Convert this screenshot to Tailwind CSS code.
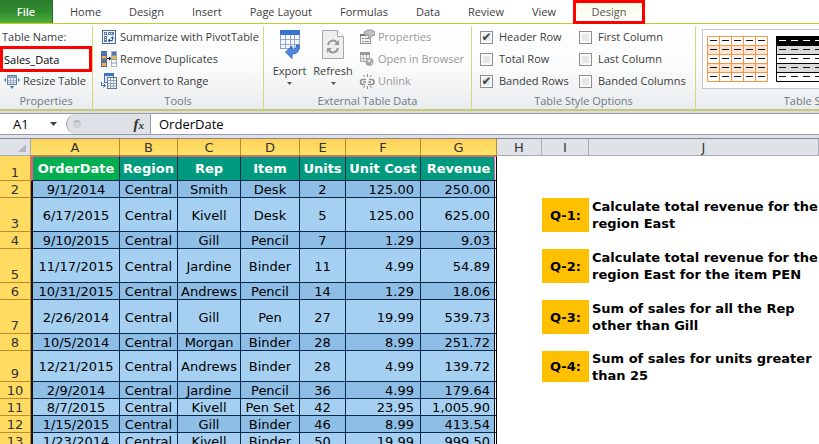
<!DOCTYPE html>
<html lang="en">
<head>
    <meta charset="UTF-8">
    <meta name="viewport" content="width=device-width, initial-scale=1.0">
    <title>Sales Data</title>
    <script src="https://cdn.jsdelivr.net/npm/@tailwindcss/browser@4"></script>
</head>
<body class="bg-white overflow-hidden font-['Open_Sans',sans-serif] text-[11px] leading-4 text-[#3c3c3c]">

    <!-- Ribbon tabs -->
    <nav class="flex h-6 whitespace-nowrap border-b border-[#c9ca2b]">
        <button class="w-[53px] mr-[3px] shrink-0 bg-linear-to-b from-[#2c7a2c] via-[#2f8c2f] to-[#4fae3c] border-r border-[#1e6b26] text-white font-semibold">File</button>
        <button class="px-3.5">Home</button>
        <button class="px-3.5">Design</button>
        <button class="px-3.5">Insert</button>
        <button class="px-3.5">Page Layout</button>
        <button class="px-3.5">Formulas</button>
        <button class="px-3.5">Data</button>
        <button class="px-3.5">Review</button>
        <button class="px-3.5">View</button>
        <button class="h-6 w-[72px] ml-[3px] border-3 border-[#fe0000] bg-linear-to-b from-[#fbfbe6] to-white text-[#555]">Design</button>
    </nav>

    <!-- Ribbon body -->
    <div class="flex h-[87px] pt-0.5 whitespace-nowrap bg-linear-to-b from-white via-[#fafbfb] to-[#e9ecee] border-b-2 border-[#c5c878] overflow-hidden">
        <section class="w-[93px] shrink-0 border-r border-[#d6d77a]">
            <label for="tableName" class="flex h-[22px] items-center pl-0.5">Table Name:</label>
            <div class="flex h-[22px] items-center">
                <input id="tableName" value="Sales_Data" class="relative h-[26px] w-[92px] shrink-0 border-3 border-[#fe0000] bg-white pl-px text-black">
            </div>
            <button class="flex h-[22px] items-center gap-[3px] pl-1">
                <svg class="w-4 h-4" viewBox="0 0 16 16">
                    <rect x="3.5" y="2.500" width="9" height="9" fill="#e8eef7" stroke="#6b7f9e"/>
                    <path d="M3 3h10v2H3z" fill="#8a9cb8"/>
                    <path d="M6.500 3v8M9.500 3v8M4 7.500h8M4 9.500h8" stroke="#a4b4cc"/>
                    <path d="M0 7l2-2v4zM16 7l-2-2v4zM6 13h4l-2 3z" fill="#2878d8"/>
                </svg>
                Resize Table
            </button>
            <h2 class="leading-[18px] text-center text-[#6f7984]">Properties</h2>
        </section>

        <section class="w-[171px] shrink-0 border-r border-[#d6d77a]">
            <button class="flex h-[22px] items-center gap-[3px] pl-2">
                <svg class="w-4 h-4" viewBox="0 0 16 16">
                    <rect x="1.500" y="1.500" width="13" height="13" fill="#eef3fa" stroke="#54678a"/>
                    <path d="M3 3h3v3H3zM7 3h6v3H7zM3 7h3v6H3z" fill="#5c7db0"/>
                    <path d="M4 4h1v1H4zM8 4h1v1H8zM10 4h1v1h-1zM4 8h1v1H4zM4 10h1v1H4z" fill="#fff"/>
                    <path d="M7.500 11.500h4v-3M9 10l-2 1.500L9 13M10 9.500L11.500 7.500 13 9.500" fill="none" stroke="#1e4f9c"/>
                </svg>
                Summarize with PivotTable
            </button>
            <button class="flex h-[22px] items-center gap-[3px] pl-2">
                <svg class="w-4 h-4" viewBox="0 0 16 16">
                    <rect x=".5" y=".5" width="5" height="15" fill="#f3b24a" stroke="#5a6f94"/>
                    <path d="M1 1h4v3H1zM1 8h4v3H1z" fill="#4d78b8"/>
                    <path d="M0 4.500h6M0 8h6M0 11.500h6" stroke="#5a6f94"/>
                    <rect x="10.500" y=".5" width="5" height="15" fill="#fff" stroke="#a6b3c8"/>
                    <path d="M11 1h4v3h-4z" fill="#4d78b8"/>
                    <path d="M11 5h4v3h-4z" fill="#f3b24a"/>
                    <path d="M10 4.500h6M10 8.500h6M10 12h6" stroke="#8798b5"/>
                    <path d="M6 7h2V5.500L10.500 7.500 8 9.500V8H6z" fill="#222"/>
                </svg>
                Remove Duplicates
            </button>
            <button class="flex h-[22px] items-center gap-[3px] pl-2">
                <svg class="w-4 h-4" viewBox="0 0 16 16">
                    <rect x="3.500" y=".5" width="9" height="9" fill="#dbe8f8" stroke="#4672b4"/>
                    <path d="M3 0h10v3H3z" fill="#3f74c4"/>
                    <rect x="6.500" y="4.500" width="9" height="11" fill="#fff" stroke="#62738f"/>
                    <path d="M9.500 5v10M12.500 5v10M7 7.500h8M7 10.500h8M7 13h8" stroke="#90a4c2"/>
                    <path d="M.5 9v3.500H4M2.500 10.500l2 2-2 2" fill="none" stroke="#2b62b8"/>
                </svg>
                Convert to Range
            </button>
            <h2 class="leading-[18px] text-center text-[#6f7984]">Tools</h2>
        </section>

        <section class="w-[208px] shrink-0 border-r border-[#d6d77a]">
            <div class="flex h-[66px]">
                <button class="flex w-[51px] shrink-0 flex-col items-center pt-1">
                    <svg class="w-5 h-[30px]" viewBox="0 0 20 30">
                        <rect x=".5" y=".5" width="19" height="18" fill="#f4f8fd" stroke="#8da3c6"/>
                        <path d="M0 0h20v5H0z" fill="#3a72d2"/>
                        <path d="M5.500 5v13M10.500 5v13M14.500 5v13M1 9.500h18M1 14.500h18" stroke="#93a8c9"/>
                        <path d="M19 15c1 6-2 9-7 9v4.500L5.500 22l6.500-6v4c3 0 4-1 4.500-5z" fill="#4f8ae6" stroke="#1f50ae" stroke-width=".8"/>
                    </svg>
                    <span class="mt-[3px]">Export</span>
                    <svg class="w-[5px] h-[3px] mt-[3px]" viewBox="0 0 5 3"><path d="M0 0h5L2.500 3z" fill="#555"/></svg>
                </button>
                <button class="flex w-11 shrink-0 flex-col items-center pt-1 -ml-1 mr-0.5">
                    <svg class="w-[22px] h-[30px]" viewBox="0 0 22 30">
                        <path d="M.5.5h15l6 6v22H.5z" fill="#eeeeef" stroke="#a8a8aa"/>
                        <path d="M15.500.5v6h6" fill="#fff" stroke="#a8a8aa"/>
                        <path d="M6 15c1-5 7-6 9-2M16 18c-1 5-7 6-9 2" fill="none" stroke="#98989a" stroke-width="2"/>
                        <path d="M17 10v5h-5zM5 23v-5h5z" fill="#98989a"/>
                    </svg>
                    <span class="mt-[3px]">Refresh</span>
                    <svg class="w-[5px] h-[3px] mt-[3px]" viewBox="0 0 5 3"><path d="M0 0h5L2.500 3z" fill="#555"/></svg>
                </button>
                <div class="text-[#9a9a9a]">
                    <button disabled class="flex h-[22px] items-center gap-[3px] pl-0.5">
                        <svg class="w-4 h-4" viewBox="0 0 16 16">
                            <rect x="1.500" y="5.500" width="10" height="9" fill="#f4f4f4" stroke="#989898"/>
                            <path d="M1 5h7v2H1z" fill="#777"/>
                            <path d="M3 9.500h2M6 9.500h4M3 12.500h2M6 12.500h4" stroke="#888"/>
                            <path d="M5 3l4-2h4l3 2v3l-3 1-2 3-2-1 1-3-4 .5z" fill="#c0c0c0" stroke="#858585" stroke-width=".8"/>
                        </svg>
                        Properties
                    </button>
                    <button disabled class="flex h-[22px] items-center gap-[3px] pl-0.5">
                        <svg class="w-4 h-4" viewBox="0 0 16 16">
                            <rect x="1.500" y="1.500" width="9" height="9" fill="#f2f2f2" stroke="#aaa"/>
                            <path d="M1 1h10v3H1z" fill="#999"/>
                            <path d="M4.500 4v6M7.500 4v6M1 7.500h9" stroke="#b5b5b5"/>
                            <circle cx="10.500" cy="11" r="4" fill="#a6a6a6"/>
                            <path d="M8 9l3-1 1 2-2 2zM12 12l2-1-1 3z" fill="#dedede"/>
                        </svg>
                        Open in Browser
                    </button>
                    <button disabled class="flex h-[22px] items-center gap-[3px] pl-0.5">
                        <svg class="w-4 h-4" viewBox="0 0 16 16" fill="none" stroke="#8e8e8e">
                            <path d="M7 6.500H4a2.500 2.500 0 0 0 0 5h2M10 6.500h2.500a2.500 2.500 0 0 1 0 5H9M4 9h3M9.500 9H12" stroke-width="1.500"/>
                            <path d="M8.500 1v3M4.500 2l1.500 2M12.500 2L11 4M8.500 13v3M4.500 15L6 13M12.500 15L11 13"/>
                        </svg>
                        Unlink
                    </button>
                </div>
            </div>
            <h2 class="leading-[18px] text-center text-[#6f7984]">External Table Data</h2>
        </section>

        <section class="w-[224px] shrink-0 border-r border-[#d6d77a]">
            <div class="grid h-[66px] grid-cols-[99px_1fr] pl-2 [&_label]:flex [&_label]:items-center [&_label]:gap-[6px] [&_input]:flex [&_input]:items-center [&_input]:justify-center [&_input]:size-[13px] [&_input]:shrink-0 [&_input]:appearance-none [&_input]:border [&_input]:border-[#8c8f94] [&_input]:bg-[#e6e7e9] [&_input]:shadow-[inset_0_0_0_2px_#f8f8f8] [&_input]:text-[12px] [&_input]:text-[#444] [&_input]:font-['DejaVu_Sans'] [&_input]:checked:before:content-['✔']">
                <label><input type="checkbox" checked>Header Row</label>
                <label><input type="checkbox">First Column</label>
                <label><input type="checkbox">Total Row</label>
                <label><input type="checkbox">Last Column</label>
                <label><input type="checkbox" checked>Banded Rows</label>
                <label><input type="checkbox">Banded Columns</label>
            </div>
            <h2 class="leading-[18px] text-center text-[#6f7984]">Table Style Options</h2>
        </section>

        <section class="w-[236px] shrink-0">
            <div class="h-[66px] pl-1.5 pt-[3px]">
                <div class="flex h-[60px] items-center gap-2 border border-[#c3c6ca] bg-white pl-1">
                    <button aria-label="Orange table style">
                        <svg class="w-[61px] h-[46px]" viewBox="0 0 61 46">
                            <path d="M0 9h61v9H0zM0 27h61v9H0z" fill="#fce4d4"/>
                            <path d="M.5.5h60v45H.5zM0 9.500h61M0 18.500h61M0 27.500h61M0 36.500h61M12.500 0v46M24.500 0v46M36.500 0v46M48.500 0v46" fill="none" stroke="#f79646"/>
                            <path d="M3 4.500h56M3 13.500h56M3 22.500h56M3 31.500h56M3 40.500h56" stroke="#111" stroke-dasharray="7 5"/>
                        </svg>
                    </button>
                    <button aria-label="Black table style">
                        <svg class="w-[61px] h-[46px]" viewBox="0 0 61 46">
                            <path d="M0 9h61v9H0zM0 27h61v9H0z" fill="#d9d9d9"/>
                            <path d="M0 0h61v9H0z"/>
                            <path d="M.5.5h60v45H.5zM0 9.500h61M0 18.500h61M0 27.500h61M0 36.500h61" fill="none" stroke="#000"/>
                            <path d="M3 4.500h56" stroke="#fff" stroke-dasharray="7 5"/>
                            <path d="M3 13.500h56M3 22.500h56M3 31.500h56M3 40.500h56" stroke="#111" stroke-dasharray="7 5"/>
                        </svg>
                    </button>
                </div>
            </div>
            <h2 class="leading-[18px] text-center text-[#6f7984]">Table Styles</h2>
        </section>
    </div>

    <!-- Formula bar -->
    <div class="border-t-2 border-b-3 border-t-[#dcdfd8] border-b-[#dfe2ee]">
        <div class="flex h-[22px] border-y border-[#9a9ea4] text-[13px] text-black">
            <input aria-label="Name box" value="A1" class="w-[50px] pl-[13px]">
            <button aria-label="Cell names" class="w-4 flex items-center">
                <svg class="w-[7px] h-1" viewBox="0 0 7 4"><path d="M0 0h7L3.500 4z" fill="#444"/></svg>
            </button>
            <div class="flex w-[85px] items-center justify-between rounded-l-full border-l border-r border-[#9a9ea4] bg-[#dee1e6] pl-1.5 pr-1.5">
                <span class="size-2 rounded-full border-t-2 border-[#b4b8be] bg-[#cfd2d7]"></span>
                <span class="font-['Liberation_Serif',serif] text-[15px] font-bold italic text-[#333]">f<span class="text-[11px]">x</span></span>
            </div>
            <input aria-label="Formula" value="OrderDate" class="min-w-0 flex-1 pl-2">
        </div>
    </div>

    <!-- Worksheet -->
    <table class="w-full table-fixed border-separate border-spacing-0 whitespace-nowrap border-t border-[#85888d] font-['DejaVu_Sans',Verdana,sans-serif] text-[13px] leading-[15px] text-black">
        <colgroup>
            <col class="w-[31px]"><col class="w-[89px]"><col class="w-[58px]"><col class="w-[63px]"><col class="w-[59px]"><col class="w-[46px]"><col class="w-[75px]"><col class="w-[76px]"><col class="w-[45px]"><col class="w-[47px]"><col>
        </colgroup>
        <thead>
            <tr class="h-[17px] text-[#333] [&>th]:p-0 [&>th]:pt-px [&>th]:font-normal [&>th]:border-r [&>th]:border-b [&>th]:border-[#a9adb3] [&>th]:bg-[#dfe2e7] [&>th.sel]:border-[#bd8a2e] [&>th.sel]:bg-linear-to-b [&>th.sel]:from-[#ffd155] [&>th.sel]:to-[#ffe46e]">
                <th><svg class="ml-auto mr-1 w-2 h-2" viewBox="0 0 8 8"><path d="M8 0v8H0z" fill="#b3b7bd"/></svg></th>
                <th class="sel">A</th><th class="sel">B</th><th class="sel">C</th><th class="sel">D</th><th class="sel">E</th><th class="sel">F</th><th class="sel">G</th>
                <th>H</th><th>I</th><th>J</th>
            </tr>
        </thead>
        <tbody id="sheet"></tbody>
    </table>

    <script>
        const header = ['OrderDate', 'Region', 'Rep', 'Item', 'Units', 'Unit Cost', 'Revenue'];

        // height class, cells, optional question
        const rows = [
            ['h-[17px]', ['9/1/2014', 'Central', 'Smith', 'Desk', '2', '125.00', '250.00']],
            ['h-[34px]', ['6/17/2015', 'Central', 'Kivell', 'Desk', '5', '125.00', '625.00'], ['Q-1:', 'Calculate total revenue for the<br>region East']],
            ['h-[17px]', ['9/10/2015', 'Central', 'Gill', 'Pencil', '7', '1.29', '9.03']],
            ['h-[34px]', ['11/17/2015', 'Central', 'Jardine', 'Binder', '11', '4.99', '54.89'], ['Q-2:', 'Calculate total revenue for the<br>region East for the item PEN']],
            ['h-[17px]', ['10/31/2015', 'Central', 'Andrews', 'Pencil', '14', '1.29', '18.06']],
            ['h-[34px]', ['2/26/2014', 'Central', 'Gill', 'Pen', '27', '19.99', '539.73'], ['Q-3:', 'Sum of sales for all the Rep<br>other than Gill']],
            ['h-[17px]', ['10/5/2014', 'Central', 'Morgan', 'Binder', '28', '8.99', '251.72']],
            ['h-[31px]', ['12/21/2015', 'Central', 'Andrews', 'Binder', '28', '4.99', '139.72'], ['Q-4:', 'Sum of sales for units greater<br>than 25']],
            ['h-[17px]', ['2/9/2014', 'Central', 'Jardine', 'Pencil', '36', '4.99', '179.64']],
            ['h-[17px]', ['8/7/2015', 'Central', 'Kivell', 'Pen Set', '42', '23.95', '1,005.90']],
            ['h-[17px]', ['1/15/2015', 'Central', 'Gill', 'Binder', '46', '8.99', '413.54']],
            ['h-[17px]', ['1/23/2014', 'Central', 'Kivell', 'Binder', '50', '19.99', '999.50']],
        ];

        const rowHead = n => `<th class="p-0 pt-px align-bottom font-normal text-[#333] bg-[#ffdb62] border-r border-b border-[#bd8a2e]">${n}</th>`;

        let html = `<tr class="h-[25px]">${rowHead(1)}`;
        header.forEach((text, i) => {
            const fill = i === 0 ? 'bg-[#00b050] border-l-2 border-l-[#f0529c]' : 'bg-[#009b7e]';
            const edge = i === 6 ? 'border-r border-r-black shadow-[inset_-1px_0_0_#fff,inset_-2px_0_0_#f0529c]' : 'border-r border-r-[#06284a]';
            html += `<th class="p-0 text-white border-t border-t-[#f0529c] border-b border-b-[#06284a] ${fill} ${edge}">${text}</th>`;
        });
        html += '<td></td><td></td><td></td></tr>';

        rows.forEach(([height, cells, question], r) => {
            html += `<tr class="${height}">${rowHead(r + 2)}`;
            cells.forEach((text, i) => {
                const fill = r % 2 ? 'bg-[#a5d0f2]' : 'bg-[#8ebde6]';
                const align = i > 4 ? 'text-right pr-1.5' : 'text-center';
                const left = i === 0 ? 'border-l-2 border-l-[#111]' : '';
                const edge = i === 6 ? 'border-r border-r-black shadow-[inset_-1px_0_0_#fff,inset_-2px_0_0_#000]' : 'border-r border-r-[#06284a]';
                html += `<td class="p-0 pt-px border-b border-b-[#06284a] ${fill} ${align} ${left} ${edge}">${text}</td>`;
            });
            html += '<td></td>';
            html += question
                ? `<td class="p-0 bg-[#ffc000] text-center font-bold">${question[0]}</td>
                   <td class="p-0 pl-[3px] font-bold"><div class="flex items-center leading-[17px] ${height}"><p>${question[1]}</p></div></td>`
                : '<td></td><td></td>';
            html += '</tr>';
        });
        document.getElementById('sheet').innerHTML = html;
    </script>
</body>
</html>
